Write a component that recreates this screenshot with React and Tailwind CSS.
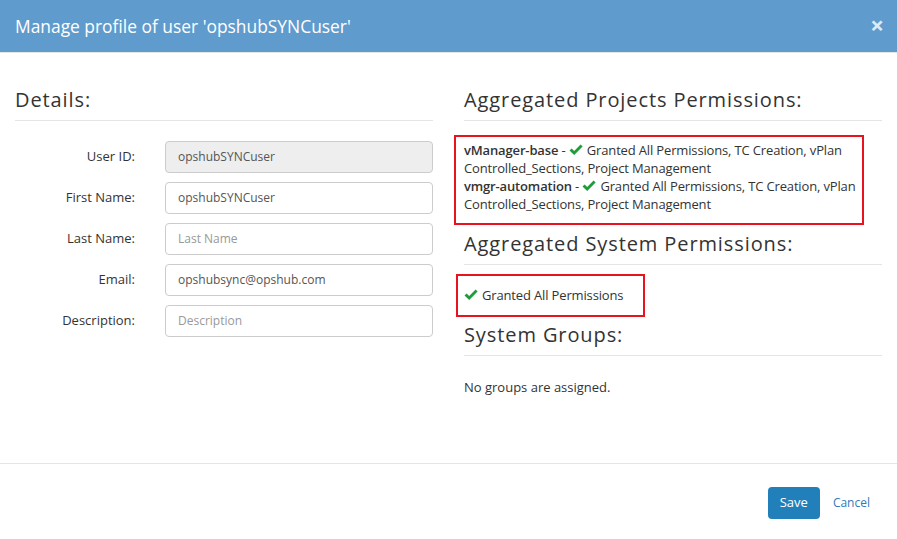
import React from 'react';

const Check = () => (
    <svg width="14" height="12" viewBox="0 0 14 12" className="inline-block mr-[4px] -mt-[3px] align-middle">
        <path d="M0.5 6.6 L2.6 4.6 L5.2 7.1 L11.6 0.6 L13.6 2.6 L5.2 11.1 Z" fill="#1f9d3a" />
    </svg>
);

const Heading = ({ children, className = '' }) => (
    <div className={`text-[20px] leading-[22px] tracking-[0.9px] text-[#333] pb-[9px] border-b border-[#e5e5e5] ${className}`}>
        {children}
    </div>
);

const FieldRow = ({ label, value, placeholder, disabled }) => (
    <div className="flex items-center gap-[30px]">
        <label className="w-[120px] text-right text-[13px] text-[#333]">{label}</label>
        <div
            className={`flex-1 h-[32px] rounded-[4px] border border-[#ccc] px-[12px] flex items-center text-[12px] ${
                disabled ? 'bg-[#eee]' : 'bg-white'
            } ${value ? 'text-[#555]' : 'text-[#999]'}`}
        >
            {value || placeholder}
        </div>
    </div>
);

const projects = [
    { name: 'vManager-base' },
    { name: 'vmgr-automation' },
];

export default function App() {
    return (
        <div className="w-[897px] h-[539px] bg-white overflow-hidden" style={{ fontFamily: '"Open Sans", sans-serif' }}>
            <div className="h-[53px] bg-[#5f9bcd] border-b border-[#e5e5e5] flex items-center justify-between pl-[15px] pr-[13px]">
                <span className="text-[17.4px] text-white">Manage profile of user 'opshubSYNCuser'</span>
                <span className="text-[24px] font-bold text-white/80 leading-none -mt-[3px]">×</span>
            </div>

            <div className="flex gap-[31px] px-[15px] h-[410px]">
                <div className="w-[418px]">
                    <Heading className="mt-[36px]">Details:</Heading>
                    <div className="mt-[20px] flex flex-col gap-[9px]">
                        <FieldRow label="User ID:" value="opshubSYNCuser" disabled />
                        <FieldRow label="First Name:" value="opshubSYNCuser" />
                        <FieldRow label="Last Name:" placeholder="Last Name" />
                        <FieldRow label="Email:" value="opshubsync@opshub.com" />
                        <FieldRow label="Description:" placeholder="Description" />
                    </div>
                </div>

                <div className="w-[418px] text-[13px] leading-[18px] text-[#333]">
                    <Heading className="mt-[36px]">Aggregated Projects Permissions:</Heading>
                    <div className="mt-[14px] -ml-[10px] w-[410px] border-2 border-[#e8131f] pl-[8px] pr-0 pt-[4px] pb-[10px] tracking-[-0.15px]">
                        {projects.map((p) => (
                            <div key={p.name}>
                                <span className="font-semibold">{p.name}</span> - <Check />Granted All Permissions, TC Creation, vPlan Controlled_Sections, Project Management
                            </div>
                        ))}
                    </div>

                    <Heading className="mt-[8px]">Aggregated System Permissions:</Heading>
                    <div className="mt-[9px] -ml-[8px] w-[189px] h-[43px] border-2 border-[#e8131f] pl-[6px] pb-[2px] flex items-center tracking-[-0.15px]">
                        <span><Check />Granted All Permissions</span>
                    </div>

                    <Heading className="mt-[7px]">System Groups:</Heading>
                    <div className="mt-[22px]">No groups are assigned.</div>
                </div>
            </div>

            <div className="border-t border-[#e5e5e5] flex justify-end items-center pr-[27px] pt-[23px]">
                <button className="h-[32px] px-[12px] rounded-[4px] bg-[#2180b9] text-white text-[13px]">Save</button>
                <span className="ml-[13px] text-[12px] text-[#337ab7]">Cancel</span>
            </div>
        </div>
    );
}
